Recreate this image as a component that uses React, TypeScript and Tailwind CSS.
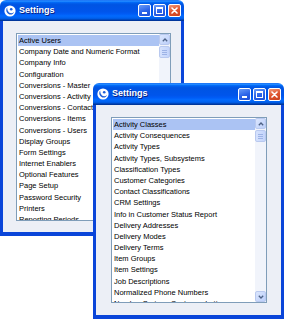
const leftItems = [
  "Active Users",
  "Company Date and Numeric Format",
  "Company Info",
  "Configuration",
  "Conversions - Master",
  "Conversions - Activity",
  "Conversions - Contacts",
  "Conversions - Items",
  "Conversions - Users",
  "Display Groups",
  "Form Settings",
  "Internet Enablers",
  "Optional Features",
  "Page Setup",
  "Password Security",
  "Printers",
  "Reporting Periods",
];

const rightItems = [
  "Activity Classes",
  "Activity Consequences",
  "Activity Types",
  "Activity Types, Subsystems",
  "Classification Types",
  "Customer Categories",
  "Contact Classifications",
  "CRM Settings",
  "Info in Customer Status Report",
  "Delivery Addresses",
  "Delivery Modes",
  "Delivery Terms",
  "Item Groups",
  "Item Settings",
  "Job Descriptions",
  "Normalized Phone Numbers",
  "Number Series - Customer Letters",
];

function AppIcon() {
  return (
    <svg width="12" height="12" viewBox="0 0 12 12" className="shrink-0">
      <circle cx="6" cy="6" r="5.6" fill="#ffffff" />
      <path d="M3.2 2.6 C1.6 4.4 2 8.2 5.4 9.4 C7.6 10.1 9.6 8.8 10 7 C8.6 8.4 6.4 8.6 5 7.4 C3.6 6.2 3.2 4.4 3.2 2.6 Z" fill="#1f5fd8" />
      <circle cx="7.2" cy="4.2" r="1.3" fill="#1f5fd8" />
    </svg>
  );
}

function TitleButtons() {
  return (
    <div className="ml-auto flex items-center gap-[2px] pr-[3px]">
      <div className="relative h-[13px] w-[13px] rounded-[2px] border border-white bg-[linear-gradient(160deg,#6a9cf8_0%,#2a62e8_55%,#1e4fd6_100%)]">
        <div className="absolute left-[3px] bottom-[2px] h-[2px] w-[5px] bg-white" />
      </div>
      <div className="flex h-[13px] w-[13px] items-center justify-center rounded-[2px] border border-white bg-[linear-gradient(160deg,#6a9cf8_0%,#2a62e8_55%,#1e4fd6_100%)]">
        <div className="h-[7px] w-[7px] border border-t-2 border-white" />
      </div>
      <div className="flex h-[13px] w-[13px] items-center justify-center rounded-[2px] border border-white bg-[linear-gradient(160deg,#f09a7a_0%,#e0552e_50%,#c8401c_100%)]">
        <svg width="7" height="7" viewBox="0 0 7 7">
          <path d="M1 1 L6 6 M6 1 L1 6" stroke="#ffffff" strokeWidth="1.6" strokeLinecap="round" />
        </svg>
      </div>
    </div>
  );
}

function ScrollBtn({ down }: { down?: boolean }) {
  return (
    <div className="flex h-[11px] w-[11px] items-center justify-center rounded-[2px] border border-[#b9c9ef] bg-[linear-gradient(135deg,#dbe6fd_0%,#bccffa_100%)]">
      <svg width="6" height="4" viewBox="0 0 6 4">
        <path d={down ? "M0.8 0.8 L3 3 L5.2 0.8" : "M0.8 3.2 L3 1 L5.2 3.2"} stroke="#4d6185" strokeWidth="1.3" fill="none" />
      </svg>
    </div>
  );
}

function ListBox({ items, w, h }: { items: string[]; w: string; h: string }) {
  return (
    <div className={`flex border border-[#7f9db9] bg-white ${w} ${h}`}>
      <div className="flex-1 overflow-hidden pt-[1px] pl-[1px] font-['Liberation_Sans',Arial,sans-serif] text-[7.5px] text-black">
        {items.map((it, i) => (
          <div
            key={it}
            className={`h-[11.2px] whitespace-nowrap pl-[1px] leading-[11.2px] ${i === 0 ? "bg-[#abc3f3]" : ""}`}
          >
            {it}
          </div>
        ))}
      </div>
      <div className="flex w-[11px] flex-col bg-[#f1f4fb]">
        <ScrollBtn />
        <div className="mt-[1px] flex h-[12px] w-[11px] flex-col items-center justify-center gap-[1px] rounded-[2px] border border-[#b9c9ef] bg-[linear-gradient(90deg,#d6e2fd_0%,#c3d4fb_100%)]">
          <div className="h-px w-[5px] bg-[#9db3e6]" />
          <div className="h-px w-[5px] bg-[#9db3e6]" />
          <div className="h-px w-[5px] bg-[#9db3e6]" />
        </div>
        <div className="flex-1" />
        <ScrollBtn down />
      </div>
    </div>
  );
}

function XpWindow({
  pos,
  titleH,
  pad,
  items,
  listW,
  listH,
}: {
  pos: string;
  titleH: string;
  pad: string;
  items: string[];
  listW: string;
  listH: string;
}) {
  return (
    <div className={`absolute flex flex-col ${pos}`}>
      <div
        className={`flex items-center rounded-t-[6px] bg-[linear-gradient(180deg,#0058ee_0%,#3593ff_4%,#288eff_6%,#127dff_8%,#036ffc_10%,#0262ee_14%,#0057e5_20%,#0054e3_24%,#0055eb_56%,#005bf5_66%,#026afe_76%,#0062ef_86%,#0052d6_92%,#0040ab_94%,#003092_100%)] pl-[4px] ${titleH}`}
      >
        <AppIcon />
        <span className="ml-[3px] font-['Liberation_Sans',Arial,sans-serif] text-[9px] font-bold text-white [text-shadow:1px_1px_0_#0a1f80]">
          Settings
        </span>
        <TitleButtons />
      </div>
      <div className={`flex-1 border-x-[3px] border-b-[4px] border-[#0a45d9] bg-[#eceff6] ${pad}`}>
        <ListBox items={items} w={listW} h={listH} />
      </div>
    </div>
  );
}

export default function App() {
  return (
    <div className="relative h-[319px] w-[284px] overflow-hidden bg-white">
      <XpWindow
        pos="left-0 top-0 w-[184px] h-[236px]"
        titleH="h-[21px]"
        pad="pl-[13px] pt-[12px]"
        items={leftItems}
        listW="w-[155px]"
        listH="h-[188px]"
      />
      <XpWindow
        pos="left-[93px] top-[83px] w-[191px] h-[236px]"
        titleH="h-[22px]"
        pad="pl-[15px] pt-[12px]"
        items={rightItems}
        listW="w-[156px]"
        listH="h-[186px]"
      />
    </div>
  );
}
